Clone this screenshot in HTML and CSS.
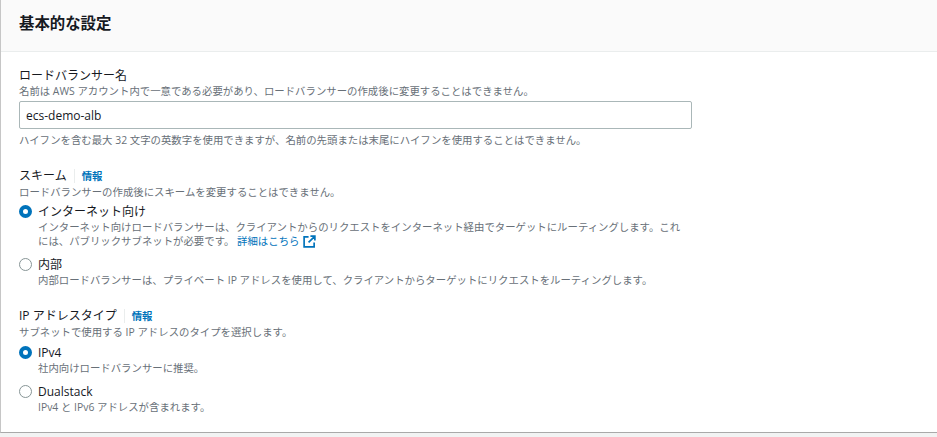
FILE: index.html
```html
<!DOCTYPE html>
<html lang="ja">
<head>
<meta charset="utf-8">
<title>基本的な設定</title>
<link rel="stylesheet" href="styles.css">
</head>
<body>
<section class="panel">
  <header class="panel-head"><h2>基本的な設定</h2></header>
  <div class="panel-body">
    <div class="field field-name">
      <div class="label">ロードバランサー名</div>
      <div class="desc">名前は AWS アカウント内で一意である必要があり、ロードバランサーの作成後に変更することはできません。</div>
      <input class="text-input" type="text" value="ecs-demo-alb">
      <div class="desc hint">ハイフンを含む最大 32 文字の英数字を使用できますが、名前の先頭または末尾にハイフンを使用することはできません。</div>
    </div>
    <div class="field field-scheme">
      <div class="label">スキーム<span class="info">情報</span></div>
      <div class="desc">ロードバランサーの作成後にスキームを変更することはできません。</div>
      <div class="radio on first">
        <span class="dot"></span>
        <div class="radio-text">
          <div class="radio-label">インターネット向け</div>
          <div class="desc">インターネット向けロードバランサーは、クライアントからのリクエストをインターネット経由でターゲットにルーティングします。これには、パブリックサブネットが必要です。 <a class="link">詳細はこちら<svg class="ext" viewBox="0 0 14 14" width="13" height="13" aria-hidden="true"><path d="M6 2H1.2v10.8H12V8M8 1.2h4.8V6M12.6 1.4 6 8" fill="none" stroke="#0073bb" stroke-width="1.8"/></svg></a></div>
        </div>
      </div>
      <div class="radio">
        <span class="dot"></span>
        <div class="radio-text">
          <div class="radio-label">内部</div>
          <div class="desc">内部ロードバランサーは、プライベート IP アドレスを使用して、クライアントからターゲットにリクエストをルーティングします。</div>
        </div>
      </div>
    </div>
    <div class="field field-ip">
      <div class="label">IP アドレスタイプ<span class="info">情報</span></div>
      <div class="desc">サブネットで使用する IP アドレスのタイプを選択します。</div>
      <div class="radio on first">
        <span class="dot"></span>
        <div class="radio-text">
          <div class="radio-label">IPv4</div>
          <div class="desc">社内向けロードバランサーに推奨。</div>
        </div>
      </div>
      <div class="radio">
        <span class="dot"></span>
        <div class="radio-text">
          <div class="radio-label">Dualstack</div>
          <div class="desc">IPv4 と IPv6 アドレスが含まれます。</div>
        </div>
      </div>
    </div>
  </div>
</section>
</body>
</html>
```
FILE: styles.css
```css
html, body {
  margin: 0;
  padding: 0;
  background: #f2f3f3;
}
body {
  width: 937px;
  height: 437px;
  overflow: hidden;
  font-family: "Open Sans", "Noto Sans CJK JP", sans-serif;
  color: #16191f;
}
.panel {
  height: 433px;
  box-sizing: border-box;
  background: #fff;
  border-left: 1px solid #c6c6c6;
  border-bottom: 1px solid #a9a9a9;
}
.panel-head {
  height: 52px;
  box-sizing: border-box;
  background: #fafafa;
  border-bottom: 1px solid #eaeded;
  padding: 14px 0 0 18px;
}
.panel-head h2 {
  margin: 0;
  font-size: 15.4px;
  line-height: 20px;
  font-weight: 700;
}
.panel-body {
  padding: 15px 0 0 18px;
}
.label {
  font-size: 12px;
  line-height: 17px;
}
.desc {
  font-size: 10.4px;
  line-height: 14px;
  color: #687078;
}
.text-input {
  display: block;
  width: 673px;
  height: 28px;
  box-sizing: border-box;
  margin: 3px 0 4px;
  padding: 0 6px;
  border: 1px solid #aab7b8;
  border-radius: 2px;
  font: 500 12px "Open Sans", sans-serif;
  color: #16191f;
  background: #fff;
}
.field-scheme { margin-top: 20px; width: 665px; }
.field-ip { margin-top: 20px; }
.info {
  margin-left: 7px;
  padding-left: 7px;
  border-left: 1px solid #eaeded;
  font-size: 10.4px;
  font-weight: 600;
  color: #0073bb;
}
.radio {
  display: flex;
  gap: 6px;
  margin-top: 8px;
}
.radio.first { margin-top: 4px; }
.field-ip .radio.first { margin-top: 5px; }
.dot {
  flex: none;
  width: 13px;
  height: 13px;
  box-sizing: border-box;
  margin-top: 2px;
  border: 1px solid #879596;
  border-radius: 50%;
  background: #fff;
}
.radio.on .dot {
  border: 4px solid #0073bb;
}
.radio-text { flex: 1; }
.radio-label {
  font-size: 12px;
  line-height: 17px;
}
.link { color: #0073bb; }
.ext {
  margin-left: 4px;
  vertical-align: -3px;
}
```
